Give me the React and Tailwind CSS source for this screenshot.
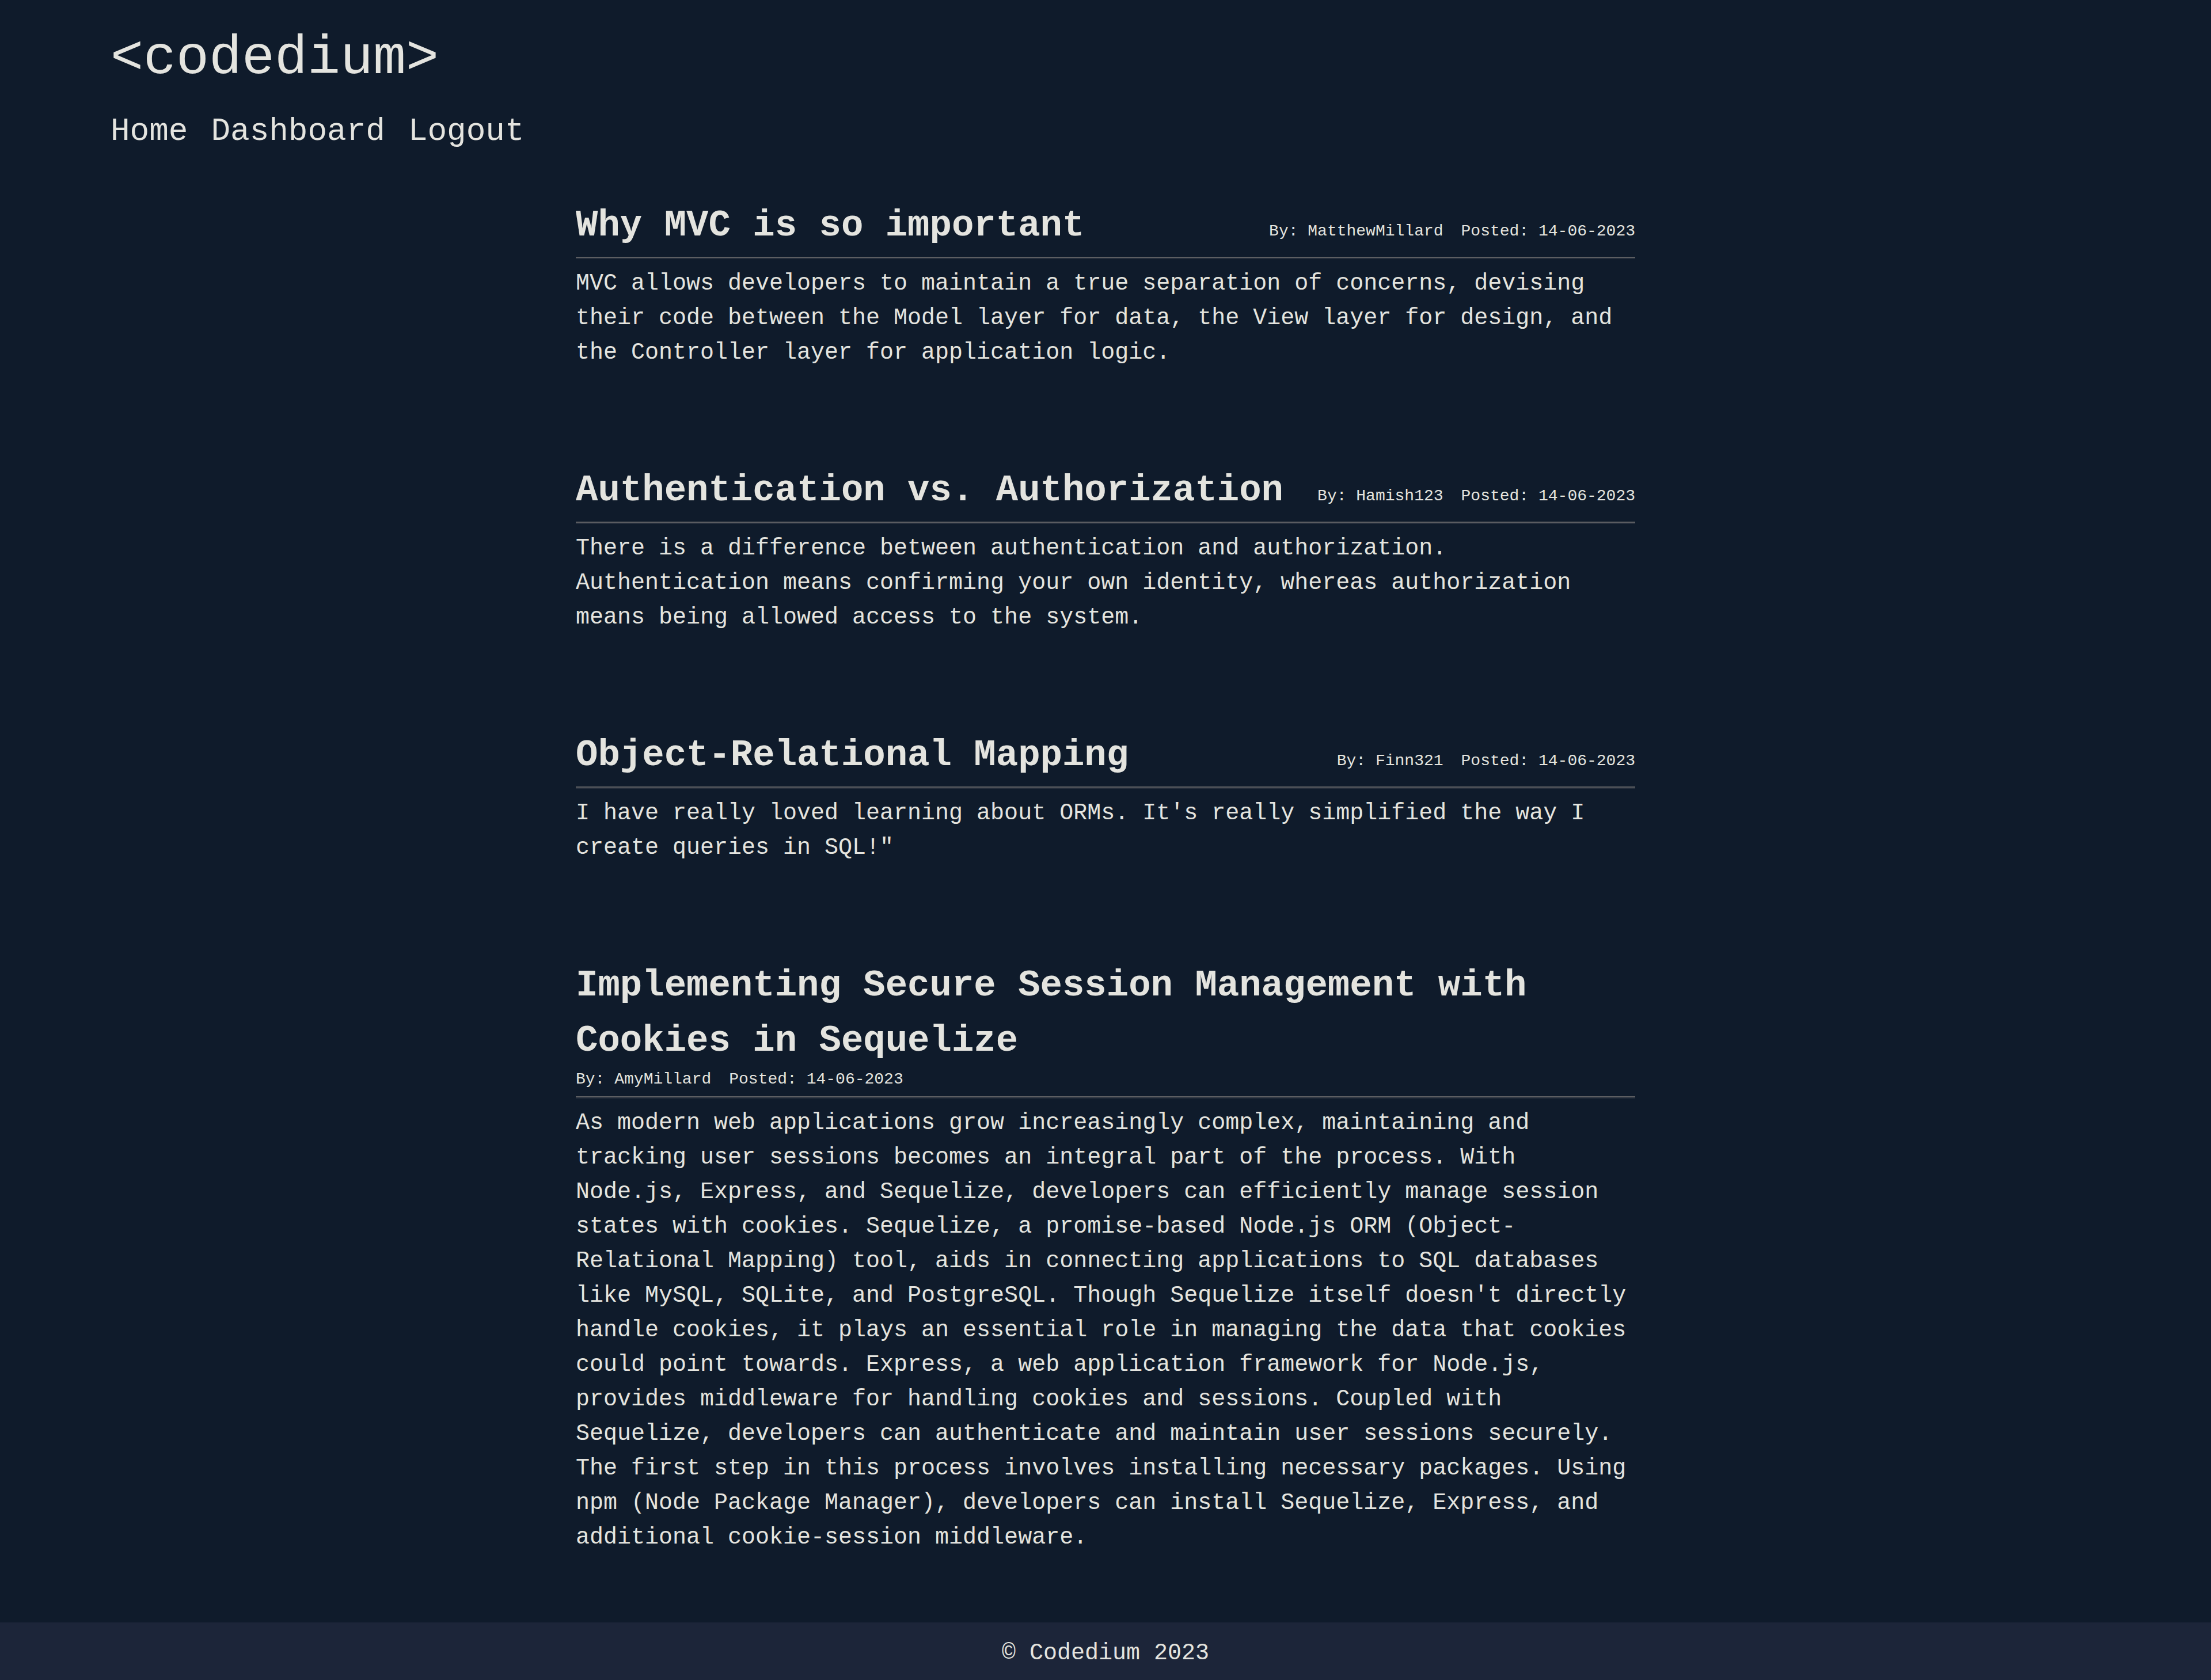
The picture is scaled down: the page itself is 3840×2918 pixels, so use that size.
import React from "react";

const posts = [
  {
    title: "Why MVC is so important",
    author: "MatthewMillard",
    date: "14-06-2023",
    body: "MVC allows developers to maintain a true separation of concerns, devising their code between the Model layer for data, the View layer for design, and the Controller layer for application logic.",
  },
  {
    title: "Authentication vs. Authorization",
    author: "Hamish123",
    date: "14-06-2023",
    body: "There is a difference between authentication and authorization. Authentication means confirming your own identity, whereas authorization means being allowed access to the system.",
  },
  {
    title: "Object-Relational Mapping",
    author: "Finn321",
    date: "14-06-2023",
    body: "I have really loved learning about ORMs. It's really simplified the way I create queries in SQL!\"",
  },
  {
    title: "Implementing Secure Session Management with Cookies in Sequelize",
    author: "AmyMillard",
    date: "14-06-2023",
    body: "As modern web applications grow increasingly complex, maintaining and tracking user sessions becomes an integral part of the process. With Node.js, Express, and Sequelize, developers can efficiently manage session states with cookies. Sequelize, a promise-based Node.js ORM (Object-Relational Mapping) tool, aids in connecting applications to SQL databases like MySQL, SQLite, and PostgreSQL. Though Sequelize itself doesn't directly handle cookies, it plays an essential role in managing the data that cookies could point towards. Express, a web application framework for Node.js, provides middleware for handling cookies and sessions. Coupled with Sequelize, developers can authenticate and maintain user sessions securely. The first step in this process involves installing necessary packages. Using npm (Node Package Manager), developers can install Sequelize, Express, and additional cookie-session middleware.",
  },
];

function Post({ post }) {
  return (
    <article>
      {/* title + meta, meta drops below when the title wraps */}
      <div className="flex flex-wrap items-baseline justify-between pb-[6px]">
        <h2 className="pt-[4px] text-[64px] leading-[96px] font-bold">{post.title}</h2>
        <div className="flex gap-[31px] pb-[4px] text-[28px] leading-[38px]">
          <span>By: {post.author}</span>
          <span>Posted: {post.date}</span>
        </div>
      </div>
      <div className="h-[2px] bg-[#5c5e62]" />
      <div className="h-[2px] bg-[#252e3c]" />
      <p className="mt-[13px] text-[40px] leading-[60px]">{post.body}</p>
    </article>
  );
}

export default function App() {
  return (
    <div className="flex min-h-screen flex-col bg-[#0f1b2b] text-[#e4e4df] font-['Liberation_Mono',monospace]">
      <header className="px-[192px] pt-[54px]">
        <h1 className="text-[95px] leading-[96px] font-light">&lt;codedium&gt;</h1>
        <nav className="mt-[50px] flex gap-[40px] text-[56px] leading-[56px]">
          <a href="#">Home</a>
          <a href="#">Dashboard</a>
          <a href="#">Logout</a>
        </nav>
      </header>

      <main className="mx-auto mt-[84px] flex w-[1840px] flex-col gap-[157px] pb-[116px]">
        {posts.map((post) => (
          <Post key={post.title} post={post} />
        ))}
      </main>

      <footer className="mt-auto bg-[#1c2539] pt-[24px] pb-[16px] text-center text-[40px] leading-[60px]">
        © Codedium 2023
      </footer>
    </div>
  );
}
